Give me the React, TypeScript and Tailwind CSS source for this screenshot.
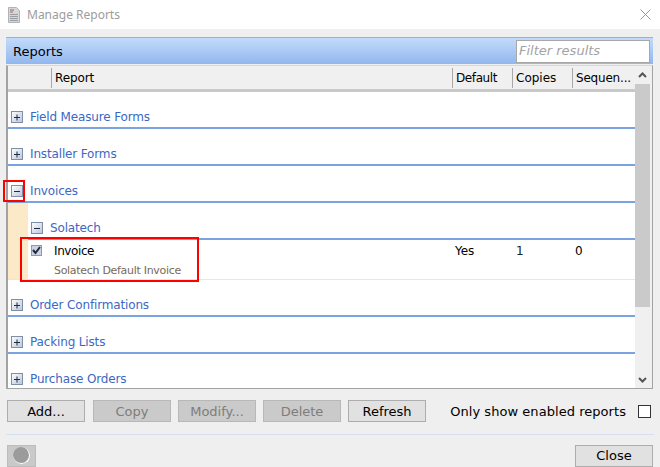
import React from "react";

const font = { fontFamily: '"DejaVu Sans", sans-serif' };

function Expander({ open }: { open?: boolean }) {
  return (
    <svg width="13" height="13" viewBox="0 0 13 13" className="shrink-0">
      <defs>
        <linearGradient id="expg" x1="0" y1="0" x2="1" y2="1">
          <stop offset="0" stopColor="#ffffff" />
          <stop offset="1" stopColor="#b8c5da" />
        </linearGradient>
      </defs>
      <rect x="0.5" y="0.5" width="11" height="11" fill="url(#expg)" stroke="#7f8fa8" />
      <path d={open ? "M3 6h6" : "M3 6h6M6 3v6"} stroke="#1f2b45" strokeWidth="1" transform="translate(0 0.5)" />
    </svg>
  );
}

function Group({ label, open }: { label: string; open?: boolean }) {
  return (
    <div className="h-[37px] flex items-end shrink-0">
      <div className="w-full h-[24px] flex items-center border-b-2 border-[#7ba3df] pl-[3px] pt-[2px]">
        <Expander open={open} />
        <span className="ml-[6px] text-[12px] text-[#3b68c4] tracking-[-0.15px]">{label}</span>
      </div>
    </div>
  );
}

function Btn({ label, disabled, cls = "" }: { label: string; disabled?: boolean; cls?: string }) {
  return (
    <div
      className={`w-[78px] h-[22px] flex items-center justify-center border text-[13px] pt-[1px] shrink-0 ${cls} ${
        disabled ? "bg-[#cacaca] border-[#b8b8b8] text-[#7d7d7d]" : "bg-[#e1e1e1] border-[#adadad] text-black"
      }`}
    >
      {label}
    </div>
  );
}

function Col({ label, w, cls = "" }: { label: string; w: string; cls?: string }) {
  return (
    <div className={`${w} h-[20px] border-l border-[#a8a8a8] pl-[3px] flex items-center text-[12px] text-black shrink-0 overflow-hidden whitespace-nowrap ${cls}`}>
      {label}
    </div>
  );
}

export default function App() {
  return (
    <div className="w-[660px] h-[467px] bg-[#efefef] flex flex-col overflow-hidden relative" style={font}>
      <div className="h-[29px] bg-white flex items-center pl-[8px] pr-[9px] shrink-0">
        <svg width="12" height="16" viewBox="0 0 12 16">
          <path d="M0.5 0.5h8l3 3v12h-11z" fill="#d4d6d8" stroke="#b0b4b8" />
          <path d="M2 3h4M2 5h3" stroke="#a06a60" />
          <path d="M2 7.5h8M2 9.5h8M2 11.5h8M2 13.5h8" stroke="#9a9ea4" />
        </svg>
        <span className="ml-[7px] text-[12px] text-[#9c9c9c]" style={{ fontFamily: '"Noto Sans", sans-serif' }}>Manage Reports</span>
        <svg width="11" height="11" viewBox="0 0 11 11" className="ml-auto">
          <path d="M0.5 0.5l10 10M10.5 0.5l-10 10" stroke="#9a9a9a" />
        </svg>
      </div>

      <div className="mt-[8px] ml-[6px] w-[647px] h-[352px] flex flex-col shrink-0">
        <div className="h-[27px] shrink-0 flex items-center justify-between pl-[7px] pr-[3px] bg-gradient-to-b from-[#c3dbfb] to-[#92b7ee] border-t border-[#8fb2ea]">
          <span className="text-[13px] text-black pt-[1px]">Reports</span>
          <div className="w-[134px] h-[23px] bg-white border border-[#a8a8a8] flex items-center pl-[2px] text-[13px] italic text-[#a3a3a3]">
            Filter results
          </div>
        </div>
        <div className="flex-1 min-h-0 mt-[1px] bg-white border-x border-b border-[#a3a3a3] border-t border-t-[#d8d8d8] border-l-2 flex">
          <div className="flex-1 min-w-0 flex flex-col">
            <div className="h-[26px] shrink-0 bg-[#f0f0f0] border-b-[3px] border-[#c9c9c9] flex items-center pl-[43px]">
              <Col label="Report" w="w-[401px]" cls="tracking-[-0.1px]" />
              <Col label="Default" w="w-[60px]" cls="tracking-[-0.4px]" />
              <Col label="Copies" w="w-[60px]" />
              <Col label="Sequen..." w="w-[61px]" cls="tracking-[-0.2px]" />
            </div>
            <div className="flex-1 min-h-0 overflow-hidden flex flex-col">
              <Group label="Field Measure Forms" />
              <Group label="Installer Forms" />
              <Group label="Invoices" open />
              <div className="flex shrink-0 h-[77px] border-b border-[#e6e6e6]">
                <div className="w-[20px] bg-[#fbe9c8] shrink-0" />
                <div className="flex-1 min-w-0 flex flex-col">
                  <Group label="Solatech" open />
                  <div className="flex-1 flex">
                    <div className="w-[427px] pl-[3px] shrink-0">
                      <div className="h-[21px] flex items-center">
                        <svg width="11" height="11" viewBox="0 0 11 11" className="shrink-0">
                          <rect x="0.5" y="0.5" width="10" height="10" fill="#cbd3e2" stroke="#8d99af" />
                          <path d="M2 5l2.5 3L9 2" fill="none" stroke="#1d2740" strokeWidth="2" />
                        </svg>
                        <span className="ml-[12px] text-[12px] text-black tracking-[-0.4px]">Invoice</span>
                      </div>
                      <div className="ml-[23px] mt-[1px] text-[11px] leading-[18px] text-[#7a6a55] tracking-[-0.3px] whitespace-nowrap">
                        Solatech Default Invoice
                      </div>
                    </div>
                    <div className="w-[61px] h-[21px] flex items-center text-[12px] text-black">Yes</div>
                    <div className="w-[59px] h-[21px] flex items-center text-[12px] text-[#222222]">1</div>
                    <div className="h-[21px] flex items-center text-[12px] text-black">0</div>
                  </div>
                </div>
              </div>
              <Group label="Order Confirmations" />
              <Group label="Packing Lists" />
              <Group label="Purchase Orders" />
            </div>
          </div>
          <div className="w-[17px] shrink-0 bg-[#f0f0f0] flex flex-col pr-[2px]">
            <div className="h-[18px] flex items-center justify-center shrink-0">
              <svg width="9" height="6" viewBox="0 0 9 6">
                <path d="M1 5l3.5-3.5L8 5" fill="none" stroke="#555555" strokeWidth="2" />
              </svg>
            </div>
            <div className="h-[223px] bg-[#cacaca] shrink-0" />
            <div className="flex-1" />
            <div className="h-[17px] flex items-center justify-center shrink-0">
              <svg width="9" height="6" viewBox="0 0 9 6">
                <path d="M1 1l3.5 3.5L8 1" fill="none" stroke="#555555" strokeWidth="2" />
              </svg>
            </div>
          </div>
        </div>
      </div>

      <div className="mt-[11px] ml-[7px] mr-[9px] h-[22px] flex items-center shrink-0 gap-[7px]">
        <Btn label="Add..." cls="mr-[1px]" />
        <Btn label="Copy" disabled />
        <Btn label="Modify..." disabled />
        <Btn label="Delete" disabled />
        <Btn label="Refresh" />
        <span className="ml-auto text-[13px] text-black whitespace-nowrap pt-[1px] tracking-[0.05px]">Only show enabled reports</span>
        <div className="ml-[5px] w-[13px] h-[13px] bg-white border border-[#333333]" />
      </div>

      <div className="mt-[12px] mx-[6px] border-t border-[#d5e1ee] shrink-0" />

      <div className="mt-[9px] ml-[7px] mr-[7px] h-[23px] flex justify-between items-center shrink-0">
        <div className="w-[29px] h-[22px] bg-[#c9c9c9] border border-[#bcbcbc] flex items-center justify-center">
          <div className="w-[17px] h-[17px] rounded-full bg-[#9b9b9b] border-b border-r border-white" />
        </div>
        <Btn label="Close" />
      </div>

      <div className="absolute left-[3px] top-[180px] w-[22px] h-[22px] border-2 border-[#ff0000]" />
      <div className="absolute left-[20px] top-[237px] w-[179px] h-[45px] border-2 border-[#ff0000]" />
    </div>
  );
}
